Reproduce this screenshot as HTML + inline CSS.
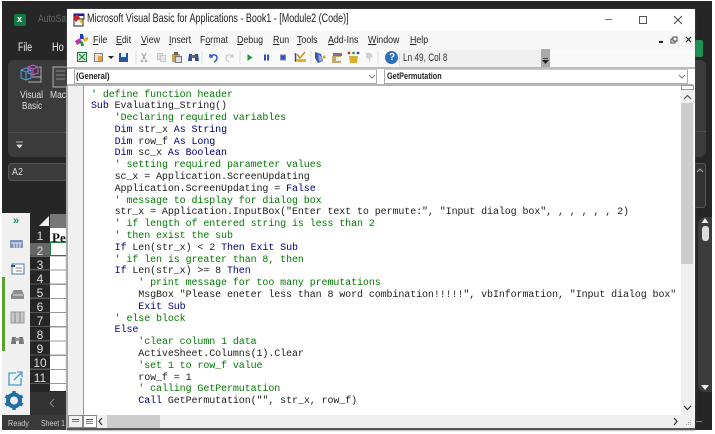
<!DOCTYPE html>
<html><head><meta charset="utf-8"><style>
html,body{margin:0;padding:0;background:#fff}
#r{position:relative;width:715px;height:434px;overflow:hidden;background:#fff;font-family:"Liberation Sans",sans-serif}
#r div,#r svg{position:absolute}
.t{white-space:pre;line-height:1;transform-origin:left top}
.m{font-size:10.500px;color:#222;top:34px;line-height:12px;white-space:pre;transform:scaleX(.84);transform-origin:left top}
.m u{text-decoration:underline}
#code{left:91px;top:89.500px;font:10px/11.800px "Liberation Mono",monospace;letter-spacing:-.09px;color:#1c1c1c;white-space:pre;filter:blur(.3px)}
#code i{font-style:normal;color:#00007f}
#code b{font-weight:normal;color:#007a00}
.n{left:30px;width:20px;text-align:center;color:#ddd;font-size:12px;line-height:14px}
</style></head><body><div id="r">
<div style="left:2px;top:1px;width:710px;height:429px;background:#262626"></div>

<!-- Excel title -->
<div style="left:14px;top:14px;width:12px;height:12px;background:#107c41;border-radius:2px"></div>
<div class="t" style="left:17px;top:15px;color:#fff;font-size:9px;font-weight:bold">x</div>
<div class="t" style="left:38px;top:14px;color:#666;font-size:11px;transform:scaleX(.78)">AutoSa</div>
<div class="t" style="left:18px;top:43px;color:#eee;font-size:11.500px;transform:scaleX(.76)">File</div>
<div class="t" style="left:52px;top:43px;color:#eee;font-size:11.500px;transform:scaleX(.8)">Ho</div>
<!-- Ribbon -->
<div style="left:8px;top:60px;width:60px;height:97px;background:#3b3b3b;border-radius:6px 0 0 6px"></div>
<div style="left:8px;top:132px;width:60px;height:1px;background:#505050"></div>
<svg style="left:19px;top:63px" width="48" height="26" viewBox="0 0 48 26"><path d="M2 7l5-2 5 2v8l-5 2-5-2zM2 7l5 2 5-2M7 9v8" fill="none" stroke="#4aa3df" stroke-width="1"/><path d="M9 4l5-2 5 2v6l-5 2-5-2zM9 4l5 2 5-2M14 6v6" fill="none" stroke="#c060c0" stroke-width="1"/><path d="M13 14h9v-10h-2M9 19h13v-5" fill="none" stroke="#9a9a9a" stroke-width="1.200"/><path d="M34 4h15v20h-15z" fill="#444" stroke="#999" stroke-width="1.200"/><path d="M37 8h9M37 12h9M37 16h9" stroke="#888"/></svg>
<div class="t" style="left:20px;top:91px;color:#ddd;font-size:10px;transform:scaleX(.85)">Visual</div>
<div class="t" style="left:22px;top:102px;color:#ddd;font-size:10px;transform:scaleX(.82)">Basic</div>
<div class="t" style="left:50px;top:91px;color:#ddd;font-size:10px;transform:scaleX(.85)">Mac</div>
<svg style="left:15px;top:141px" width="9" height="8" viewBox="0 0 9 8"><path d="M1 1h7M2 4h5l-2.500 3z" fill="#ddd" stroke="#ddd" stroke-width=".7"/></svg>
<!-- Name box -->
<div style="left:8px;top:163px;width:60px;height:18px;background:#3b3b3b;border:1px solid #555;border-radius:4px;box-sizing:border-box"></div>
<div class="t" style="left:12px;top:167px;color:#ddd;font-size:10.500px;transform:scaleX(.85)">A2</div>
<!-- Left panel -->
<div style="left:2px;top:213px;width:28px;height:202px;background:#f0f0f0"></div>
<div style="left:2px;top:277px;width:3px;height:74px;background:#5aa02c"></div>
<div class="t" style="left:13px;top:216px;color:#1f8a4c;font-size:11px;font-weight:bold">»</div>
<svg style="left:9px;top:238px" width="16" height="14" viewBox="0 0 16 14"><rect x="1" y="2" width="13" height="8" rx="1" fill="#7f93b8"/><path d="M2 5h11M5 5v5M8 5v5M11 5v5" stroke="#fff" stroke-width=".8"/></svg>
<svg style="left:10px;top:262px" width="15" height="14" viewBox="0 0 15 14"><rect x="2" y="2" width="12" height="10" fill="#fff" stroke="#4a72b0"/><path d="M1 4h4" stroke="#24509a" stroke-width="2"/><path d="M6 6h6M6 9h6" stroke="#888"/></svg>
<svg style="left:10px;top:288px" width="15" height="13" viewBox="0 0 15 13"><path d="M4 2h8l2 5v4H1V7z" fill="#8d8d8d"/><path d="M3 7h10" stroke="#ddd"/></svg>
<svg style="left:10px;top:311px" width="15" height="13" viewBox="0 0 15 13"><rect x="1" y="1" width="13" height="11" fill="#c8c8c8" stroke="#999"/><path d="M5 1v11M10 1v11" stroke="#888"/></svg>
<svg style="left:10px;top:333px" width="15" height="13" viewBox="0 0 15 13"><path d="M2 4h4v7H1zM9 4h4l1 7H9z" fill="#777"/><rect x="5" y="5" width="5" height="3" fill="#999"/></svg>
<svg style="left:7px;top:370px" width="17" height="17" viewBox="0 0 17 17"><path d="M9 3H2v12h12V8" fill="none" stroke="#4a9bd0" stroke-width="1.300"/><path d="M7 10l8-8M10 2h5v5" fill="none" stroke="#4a9bd0" stroke-width="1.300"/></svg>
<svg style="left:4px;top:390px" width="20" height="21" viewBox="0 0 20 21"><circle cx="10" cy="10.500" r="6" fill="none" stroke="#1f6fa8" stroke-width="4"/><path d="M10 1v4M10 16v4M1.500 6l3.500 2M15 13l3.500 2M1.500 15l3.500-2M15 8l3.500-2" stroke="#1f6fa8" stroke-width="3.400"/></svg>

<!-- Sheet -->
<div style="left:50px;top:214px;width:17px;height:14px;background:#777"></div>
<svg style="left:38px;top:215px" width="12" height="12"><path d="M11 1v10H1z" fill="#eee"/></svg>
<div style="left:30px;top:243px;width:20px;height:14px;background:#666"></div>
<div style="left:30px;top:242px;width:20px;height:150px;background:repeating-linear-gradient(transparent 0,transparent 13px,#555 13px,#555 14.200px)"></div>
<div class="n" style="top:229px">1</div>
<div class="n" style="top:243.500px">2</div>
<div class="n" style="top:257.500px">3</div>
<div class="n" style="top:272px">4</div>
<div class="n" style="top:286px">5</div>
<div class="n" style="top:300px">6</div>
<div class="n" style="top:314px">7</div>
<div class="n" style="top:328px">8</div>
<div class="n" style="top:342px">9</div>
<div class="n" style="top:356px">10</div>
<div class="n" style="top:371px">11</div>
<div style="left:50px;top:228px;width:17px;height:163px;background:repeating-linear-gradient(#fff 0,#fff 13px,#999 13px,#999 14.200px)"></div>
<div style="left:50px;top:242px;width:17px;height:14px;border:1px solid #1f7a45;box-sizing:border-box;background:#fff"></div>
<div class="t" style="left:52px;top:230px;font:bold 13px 'Liberation Serif',serif;color:#111">Per</div>
<div style="left:30px;top:392px;width:38px;height:23px;background:#333"></div>
<svg style="left:48px;top:398px" width="8" height="10"><path d="M6 1L2 5l4 4" fill="none" stroke="#888"/></svg>
<div style="left:2px;top:415px;width:66px;height:15px;background:#3a3a3a"></div>
<div class="t" style="left:8px;top:419px;color:#ccc;font-size:8.500px;transform:scaleX(.85)">Ready</div>
<div class="t" style="left:41px;top:419px;color:#ccc;font-size:8.500px;transform:scaleX(.82)">Sheet 1</div>

<!-- right side excel -->
<div style="left:695px;top:40px;width:8px;height:17px;background:#1f9150;border-radius:2px"></div>
<div style="left:695px;top:60px;width:11px;height:97px;background:#3b3b3b;border-radius:0 6px 6px 0"></div>
<div style="left:695px;top:131px;width:11px;height:1px;background:#505050"></div>
<div style="left:695px;top:163px;width:11px;height:45px;background:#333;border:1px solid #555;border-left:0;border-radius:0 3px 3px 0;box-sizing:border-box"></div>
<svg style="left:696px;top:168px" width="9" height="6"><path d="M1 4l3-3 3 3" fill="none" stroke="#aaa"/></svg>
<div style="left:698px;top:217px;width:14px;height:175px;background:#3c3c3c;border-radius:7px 0 0 7px"></div>
<svg style="left:700px;top:217px" width="10" height="8"><path d="M5 1l3.500 5h-7z" fill="#eee"/></svg>
<div style="left:702px;top:226px;width:7px;height:15px;background:#ddd;border-radius:3px"></div>
<svg style="left:700px;top:384px" width="10" height="7"><path d="M1 1h8L5 6z" fill="#eee"/></svg>
<div style="left:696px;top:421px;width:6px;height:1px;background:#888"></div>

<!-- VBA window -->
<div style="left:67px;top:9px;width:628px;height:421px;background:#fff;box-shadow:0 0 2px #555"></div>
<svg style="left:71px;top:12px" width="15" height="15" viewBox="0 0 15 15"><rect x="3" y="6" width="9" height="8" fill="#fff" stroke="#222"/><rect x="3" y="2" width="10" height="5" fill="#fff" stroke="#222"/><path d="M3 2h10v2H3z" fill="#1b1b9a"/><path d="M2 6l4-4 3 4-4 4z" fill="#d02020"/><path d="M8 8l4 0-2 4z" fill="#e0c020"/></svg>
<div class="t" style="left:87px;top:14px;font-size:11.500px;color:#1a1a1a;transform:scaleX(.78)">Microsoft Visual Basic for Applications - Book1 - [Module2 (Code)]</div>
<div style="left:605px;top:19px;width:7px;height:1px;background:#777"></div>
<div style="left:639px;top:16px;width:8px;height:8px;border:1px solid #555;box-sizing:border-box"></div>
<svg style="left:673px;top:15px" width="10" height="10"><path d="M1 1l8 8M9 1l-8 8" stroke="#444"/></svg>

<div style="left:67px;top:31px;width:628px;height:19px;background:#f7f7f7"></div>
<div style="left:67px;top:50px;width:628px;height:17px;background:#f9f9f9"></div>
<svg style="left:74px;top:32px" width="15" height="15" viewBox="0 0 15 15"><path d="M1 9l5-3 2 4-5 3z" fill="#c030b0"/><path d="M6 2h3l1 5H6z" fill="#1b3fb0"/><path d="M9 7l5-2 0 3-4 2z" fill="#d8b020"/><path d="M6 9l3 1 1 4-3 0z" fill="#209040"/></svg>
<div class="m" style="left:93px"><u>F</u>ile</div>
<div class="m" style="left:116px"><u>E</u>dit</div>
<div class="m" style="left:141px"><u>V</u>iew</div>
<div class="m" style="left:169px"><u>I</u>nsert</div>
<div class="m" style="left:200px">F<u>o</u>rmat</div>
<div class="m" style="left:237px"><u>D</u>ebug</div>
<div class="m" style="left:273px"><u>R</u>un</div>
<div class="m" style="left:297px"><u>T</u>ools</div>
<div class="m" style="left:328px"><u>A</u>dd-Ins</div>
<div class="m" style="left:368px"><u>W</u>indow</div>
<div class="m" style="left:410px"><u>H</u>elp</div>
<div style="left:659px;top:41px;width:4px;height:2px;background:#222"></div>
<svg style="left:670px;top:36px" width="8" height="8"><rect x="1" y="3" width="4" height="4" fill="#fff" stroke="#444"/><rect x="3" y="1" width="4" height="4" fill="#fff" stroke="#444"/></svg>
<svg style="left:685px;top:36px" width="7" height="7"><path d="M1 1l5 5M6 1L1 6" stroke="#222" stroke-width="1.200"/></svg>

<!-- toolbar -->
<svg style="left:75px;top:50px" width="310" height="15" viewBox="0 0 310 15">
<rect x="2.500" y="2.500" width="9" height="9" fill="#c8e8c8" stroke="#1e7a3c"/><path d="M4 4l6 6M10 4l-6 6" stroke="#1e7a3c"/>
<rect x="19.500" y="3.500" width="8" height="8" fill="#e8e0d0" stroke="#888"/><rect x="23" y="6" width="4" height="5" fill="#e8a040"/>
<path d="M33 6h6l-3 3z" fill="#222"/>
<rect x="44" y="3" width="9" height="9" fill="#2f4fa8"/><rect x="46" y="3" width="5" height="4" fill="#cfe"/>
<path d="M61 1v13" stroke="#ddd"/>
<path d="M67 3l3 6M71 3l-3 6" stroke="#aaa" stroke-width="1.200"/><circle cx="67" cy="11" r="1.500" fill="#bbb"/><circle cx="71" cy="11" r="1.500" fill="#bbb"/>
<rect x="82.500" y="3.500" width="5" height="6" fill="#e0e0e0" stroke="#c8c8c8"/><rect x="85.500" y="5.500" width="5" height="6" fill="#e8e8e8" stroke="#c8c8c8"/>
<rect x="97" y="4" width="8" height="8" fill="#c8a060"/><rect x="100.500" y="6.500" width="6" height="6" fill="#ddd" stroke="#777"/><rect x="99" y="2" width="4" height="3" fill="#666"/>
<path d="M114 4h3v7h-4zM120 4h3l1 7h-4z" fill="#2f4f90"/><rect x="116" y="5" width="5" height="3" fill="#667"/>
<path d="M127 1v13" stroke="#ddd"/>
<path d="M135 4v3h3M135 7c2-3 7-3 7 1 0 2-1 3-3 4" fill="none" stroke="#2860c0" stroke-width="1.500"/>
<path d="M158 4v3h-3M158 7c-2-3-7-3-7 1 0 2 1 3 3 4" fill="none" stroke="#ccc" stroke-width="1.300"/>
<path d="M165 1v13" stroke="#ddd"/>
<path d="M172.500 4l5 3.500-5 3.500z" fill="#1f9a3c"/>
<path d="M190 4.500v6M193 4.500v6" stroke="#3050c0" stroke-width="2"/>
<rect x="205.500" y="5" width="5" height="5" fill="#3050c0" stroke="#88a"/>
<path d="M220.500 3v8h10" fill="none" stroke="#3050a0" stroke-width="1.500"/><path d="M222 4l3 4 5-6" fill="none" stroke="#d09020" stroke-width="1.500"/><rect x="221" y="9" width="10" height="3" fill="#e0b030"/>
<path d="M236 1v13" stroke="#ddd"/>
<path d="M240 2l6 2 2 7-5 2-3-5z" fill="#3858a8"/><path d="M243 4l4 3v5l-3-1z" fill="#90a8d8"/><circle cx="249" cy="7" r="1.500" fill="#e0a030"/>
<rect x="257" y="6" width="9" height="7" fill="#c8a868"/><path d="M258 3h9v3h-9z" fill="#778"/><rect x="261" y="7" width="5" height="4" fill="#eee"/>
<path d="M274 6h9l-1 7h-7z" fill="#d8b030"/><circle cx="274" cy="3" r="1.400" fill="#c03030"/><circle cx="278.500" cy="3" r="1.400" fill="#30a040"/><circle cx="283" cy="3" r="1.400" fill="#3050c0"/>
<path d="M291 3h5l2 4-3 1v5l-1-4-3-1z" fill="#d0d0d0"/>
<path d="M303 1v13" stroke="#ddd"/>
</svg>
<div style="left:385px;top:51px;width:13px;height:13px;border-radius:50%;background:#2f6fc0"></div>
<div class="t" style="left:389px;top:53px;color:#fff;font-size:10px;font-weight:bold">?</div>
<div style="left:400px;top:50px;width:141px;height:17px;background:#f0f0f0"></div>
<div style="left:399px;top:52px;width:1px;height:14px;background:#ddd"></div>
<div class="t" style="left:403px;top:53px;color:#333;font-size:11px;transform:scaleX(.75)">Ln 49, Col 8</div>
<div style="left:541px;top:49px;width:9px;height:18px;background:#aaa"></div>
<div style="left:543px;top:58px;width:5px;height:1px;background:#444"></div>
<svg style="left:542px;top:60px" width="7" height="5"><path d="M0 0h7L3.500 4z" fill="#222"/></svg>
<div style="left:67px;top:67px;width:628px;height:2px;background:#bbb"></div>

<!-- combos -->
<div style="left:67px;top:69px;width:628px;height:16px;background:#fff"></div>
<div style="left:74px;top:69px;width:303px;height:15px;border:1px solid #aaa;border-top-color:#ccc;box-sizing:border-box;background:#fff"></div>
<div class="t" style="left:76px;top:72px;font-size:9px;color:#222;font-weight:bold;transform:scaleX(.85)">(General)</div>
<svg style="left:368px;top:74px" width="8" height="6"><path d="M1 1l3 3 3-3" fill="none" stroke="#777"/></svg>
<div style="left:384px;top:69px;width:304px;height:15px;border:1px solid #aaa;border-top-color:#ccc;box-sizing:border-box;background:#fff"></div>
<div class="t" style="left:387px;top:72px;font-size:9px;color:#222;font-weight:bold;transform:scaleX(.81)">GetPermutation</div>
<svg style="left:678px;top:74px" width="8" height="6"><path d="M1 1l3 3 3-3" fill="none" stroke="#777"/></svg>
<div style="left:67px;top:84px;width:626px;height:2px;background:#b5b5b5"></div>

<!-- code area -->
<div style="left:66px;top:86px;width:2px;height:344px;background:#aaa"></div>
<div style="left:68px;top:86px;width:15px;height:329px;background:#f0f0f0"></div>
<div style="left:83px;top:86px;width:1px;height:329px;background:#999"></div>
<div style="left:84px;top:86px;width:597px;height:329px;background:#fff"></div>
<div id="code"><b>' define function header</b>
<i>Sub</i> Evaluating_String()
    <b>'Declaring required variables</b>
    <i>Dim</i> str_x <i>As String</i>
    <i>Dim</i> row_f <i>As Long</i>
    <i>Dim</i> sc_x <i>As Boolean</i>
    <b>' setting required parameter values</b>
    sc_x = Application.ScreenUpdating
    Application.ScreenUpdating = <i>False</i>
    <b>' message to display for dialog box</b>
    str_x = Application.InputBox("Enter text to permute:", "Input dialog box", , , , , , 2)
    <b>' if length of entered string is less than 2</b>
    <b>' then exist the sub</b>
    <i>If</i> Len(str_x) &lt; 2 <i>Then Exit Sub</i>
    <b>' if len is greater than 8, then</b>
    <i>If</i> Len(str_x) &gt;= 8 <i>Then</i>
        <b>' print message for too many premutations</b>
        MsgBox "Please eneter less than 8 word combination!!!!!", vbInformation, "Input dialog box"
        <i>Exit Sub</i>
    <b>' else block</b>
    <i>Else</i>
        <b>'clear column 1 data</b>
        ActiveSheet.Columns(1).Clear
        <b>'set 1 to row_f value</b>
        row_f = 1
        <b>' calling GetPermutation</b>
        <i>Call</i> GetPermutation("", str_x, row_f)</div>
<!-- v scrollbar -->
<div style="left:681px;top:86px;width:13px;height:329px;background:#f0f0f0"></div>
<div style="left:681px;top:103px;width:12px;height:161px;background:#cdcdcd"></div>
<svg style="left:683px;top:94px" width="9" height="6"><path d="M1 5l3.500-3.500L8 5" fill="none" stroke="#555" stroke-width="1.200"/></svg>
<svg style="left:683px;top:405px" width="9" height="6"><path d="M1 1l3.500 3.500L8 1" fill="none" stroke="#333" stroke-width="1.200"/></svg>
<div style="left:681px;top:85px;width:13px;height:5px;border:1px solid #999;box-sizing:border-box;background:#fff"></div>
<!-- h scrollbar -->
<div style="left:68px;top:415px;width:627px;height:13px;background:#f0f0f0"></div>
<div style="left:68px;top:415px;width:15px;height:13px;background:#eee;border:1px solid #888;box-sizing:border-box"></div>
<div style="left:83px;top:415px;width:14px;height:13px;background:#fff;border:1px solid #888;box-sizing:border-box"></div>
<div style="left:72px;top:419px;width:7px;height:1px;background:#555;box-shadow:0 2px #888"></div>
<div style="left:86px;top:419px;width:7px;height:1px;background:#555;box-shadow:0 2px #888,0 4px #888"></div>
<svg style="left:97px;top:417px" width="7" height="9"><path d="M5 1L2 4.500 5 8" fill="none" stroke="#333" stroke-width="1.200"/></svg>
<div style="left:107px;top:415px;width:53px;height:13px;background:#cdcdcd"></div>
<svg style="left:672px;top:417px" width="7" height="9"><path d="M2 1l3 3.500L2 8" fill="none" stroke="#333" stroke-width="1.200"/></svg>
<svg style="left:684px;top:419px" width="9" height="9"><path d="M6 1h1v1H6zM4 3h1v1H4zM6 3h1v1H6zM2 5h1v1H2zM4 5h1v1H4zM6 5h1v1H6z" fill="#aaa"/></svg>
<div style="left:67px;top:428px;width:628px;height:2px;background:#555"></div>
</div></body></html>
